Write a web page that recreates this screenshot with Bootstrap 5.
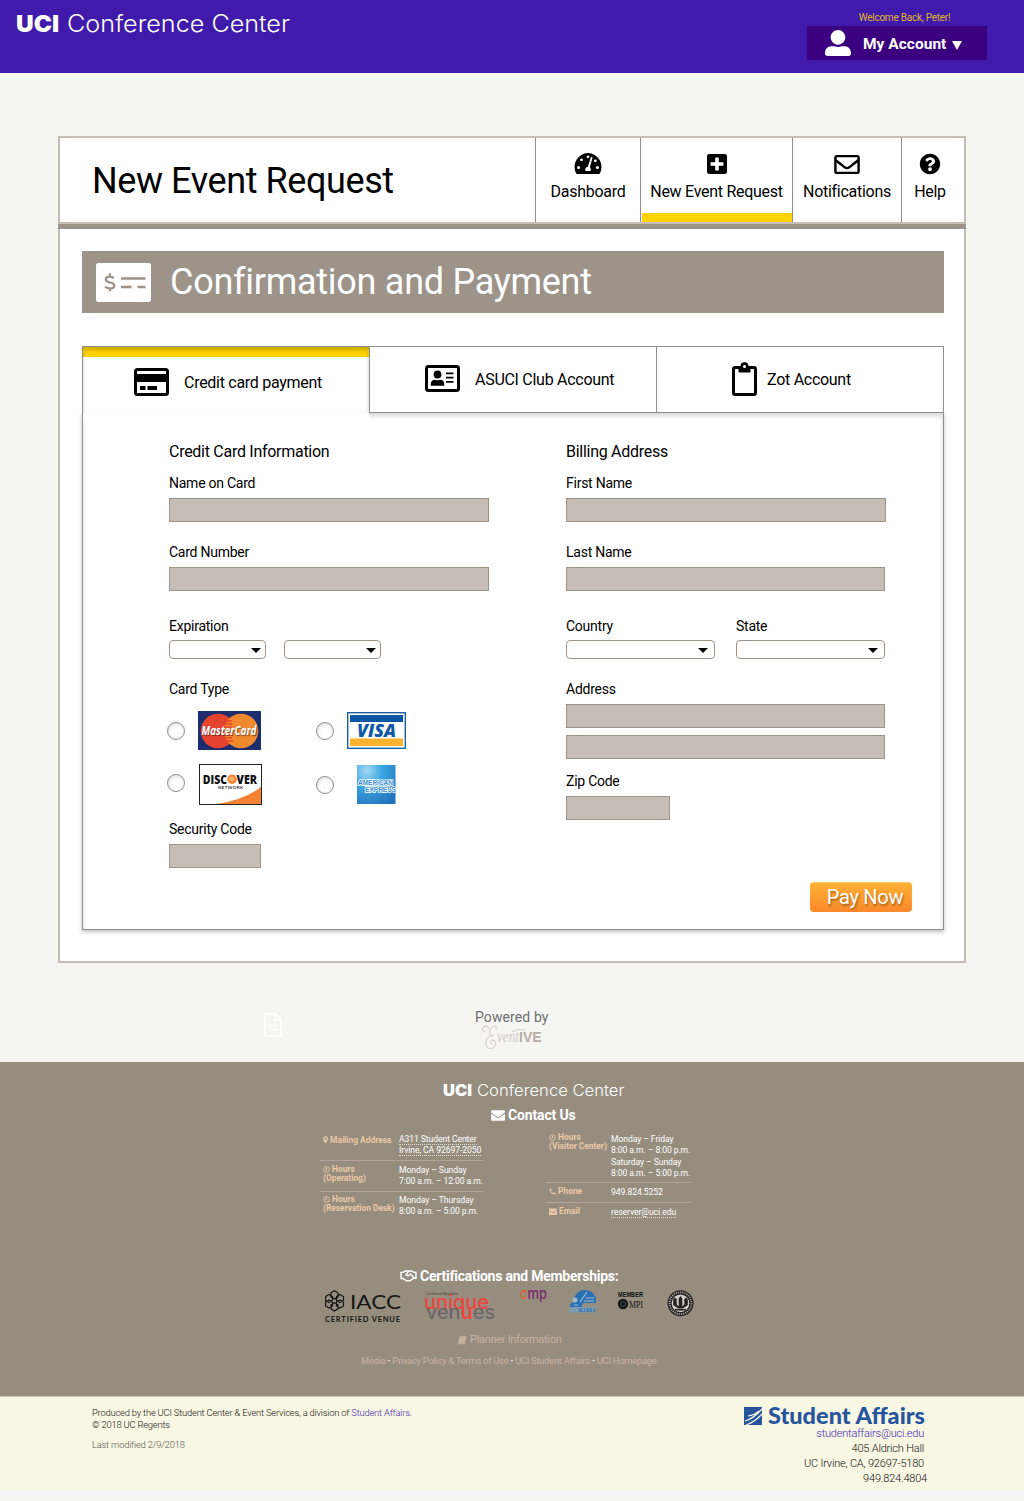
<!DOCTYPE html>
<html lang="en">
<head>
<meta charset="utf-8">
<meta name="viewport" content="width=device-width, initial-scale=1">
<title>New Event Request</title>
<link href="https://cdn.jsdelivr.net/npm/bootstrap@5.3.0/dist/css/bootstrap.min.css" rel="stylesheet">
<style>
body{font-family:Roboto,"Liberation Sans",sans-serif;font-size:16px;line-height:18px;letter-spacing:-.28px;color:#000;background:#f5f5f3}
svg{display:block;flex:none;overflow:visible;letter-spacing:0}
.topbar{height:73px;background:#3f1aab;padding:12px 37px 0 16px}
.welcome{font-size:10px;line-height:12px;color:#e2b52a;width:180px;text-align:center;padding-left:15px;letter-spacing:-.24px;margin-bottom:2px}
.account-btn{width:180px;height:34px;background:#3b0080;font-weight:700;font-size:15.5px;letter-spacing:.02px;padding:0 0 0 18px}
.frame{width:908px;height:827px;margin:63px auto 0;border:2px solid #c5beb6;background:#fff}
.frame-head{height:91px;border-bottom:5px solid #9d9389;margin:0 -2px}
.frame-head-in{height:86px;border-bottom:2px solid #c5beb6;padding-left:34px}
.frame-head h1{font-size:36px;line-height:42px;letter-spacing:-.41px;margin:0;padding-top:22px}
.nav-cell{border-left:1px solid #8f8f8f;color:#000;padding:15px 0 0;text-align:center;line-height:18px}
.nav-cell svg{height:22px;margin:0 auto 8px}
.nav-cell .strip{height:9px;background:#ffd200;margin:12px -1px 0 1px}
.banner{margin:22px 20px 0 22px;height:62px;background:#9d9389;color:#fff;padding-left:14px}
.banner h2{font-size:36px;line-height:42px;letter-spacing:-.27px;margin:0 0 0 19px}
.pay-tabs{margin:33px 20px 0 22px;height:67px;position:relative;z-index:1}
.pay-tab{border:1px solid #8f8f8f;border-left-width:0;background:#fff;color:#000}
.pay-tab.on{border-left-width:1px;border-bottom:0;box-shadow:inset 0 3px 4px rgba(0,0,0,.2),inset 0 10px #ffd200}
.panel{margin:-1px 20px 0 22px;height:518px;border:1px solid #8f8f8f;box-shadow:0 2px 4px rgba(0,0,0,.25),inset 0 3px 5px rgba(0,0,0,.16);padding:30px 31px 0 86px;position:relative}
.tab-joint{width:286px;height:9px;background:#fff;top:-1px;left:0}
.lbl{font-size:14px;line-height:16px;margin:0 0 7px;display:block;letter-spacing:-.25px}
.fld{height:24px;min-height:24px;padding:0 6px;border:1px solid #9d9389;background:#c6bdb6}
.pick{height:19px;padding:0 4px;border:1px solid #9d9389;border-radius:4px;background:#fff;color:#000;display:flex;align-items:center;justify-content:flex-end}
.pick::after{margin:2px 0 0!important;border-top:5px solid;border-left:5px solid transparent;border-right:5px solid transparent}
.form-check-input.rad{width:18px;height:18px;margin:0;float:none;border:1.5px solid #8d8d8d;background:radial-gradient(circle at 55% 60%,#fff 35%,#d8d8d8 100%)}
.pay-now{width:102px;height:30px;padding:0 0 0 8px;border:0;border-radius:4px;background:linear-gradient(#ffb236,#f9892b);box-shadow:inset 0 1px 1px #ffc870;color:#fff;font-size:20px;letter-spacing:-.3px;line-height:30px;text-shadow:1px 2px 2px rgba(90,50,0,.5)}
.powered{height:99px;padding-top:46px;color:#6f6f6f;font-size:14px}
.foot{height:334px;background:#968d7f;color:#fff;padding-top:19px}
.foot h3{font-size:14px;line-height:16px;font-weight:700;margin:0}
.info{font-size:8.6px;line-height:11.4px;letter-spacing:-.08px}
.info-row{border-bottom:1px solid #b3a49a}
.info-key{flex:none;font-weight:700;color:#ecc8a6;line-height:8.6px;font-size:8.4px;letter-spacing:0}
.info-key svg{display:inline-block;vertical-align:-1px}
.dotted{border-bottom:1px dotted #ddd}
.tan{color:#c9b39f}
.cream{height:94px;background:#f8f7e4;border-top:1px solid #c9c3b4;font-weight:300;padding:10px 97px 0 92px;font-size:9.4px;line-height:12px;letter-spacing:-.2px;color:#111}
.cream a{color:#4326b0;text-decoration:none}
.addr{font-size:11px;line-height:15px;letter-spacing:-.2px}
</style>
<script src="https://cdn.jsdelivr.net/npm/bootstrap@5.3.0/dist/js/bootstrap.bundle.min.js"></script>
</head>
<body>
<header class="topbar d-flex justify-content-between align-items-start">
  <svg width="276" height="26" viewBox="0 0 276 26" fill="#fff">
    <text x="0" y="20" font-family="Inter" font-weight="900" font-size="23.500" textLength="43" lengthAdjust="spacingAndGlyphs">UCI</text>
    <text x="51" y="20" font-family="Inter" font-weight="300" font-size="23.500" textLength="223" lengthAdjust="spacingAndGlyphs">Conference Center</text>
  </svg>
  <div>
    <div class="welcome">Welcome Back, Peter!</div>
    <button class="account-btn btn rounded-0 border-0 text-white d-flex align-items-center">
      <svg width="26" height="26" viewBox="0 0 512 512" fill="#fff"><path d="M256 288c79.500 0 144-64.500 144-144S335.500 0 256 0 112 64.500 112 144s64.500 144 144 144zm128 32h-55.100c-22.200 10.200-46.900 16-72.900 16s-50.600-5.800-72.900-16H128C57.300 320 0 377.300 0 448v16c0 26.500 21.500 48 48 48h416c26.500 0 48-21.500 48-48v-16c0-70.700-57.300-128-128-128z"/></svg>
      <span class="ms-2 ps-1" style="padding-top:3px">My Account</span>
      <svg class="mt-1" width="12" height="9" viewBox="0 0 12 9" style="margin-left:5px"><path d="M1 0h10L6 9z" fill="#fff"/></svg>
    </button>
  </div>
</header>

<main class="frame">
  <div class="frame-head">
    <div class="frame-head-in d-flex">
      <h1 class="fw-normal flex-grow-1">New Event Request</h1>
      <nav class="d-flex">
        <a class="nav-cell text-decoration-none" href="#" style="width:105px">
          <svg width="28" viewBox="0 0 28 22"><path d="M14 0a14 14 0 0 0-12 20.200q.5.800 1.300.800h21.400q.8 0 1.300-.800A14 14 0 0 0 14 0z"/><g fill="#fff"><circle cx="14" cy="3.800" r="1.400"/><circle cx="7.500" cy="6.800" r="1.400"/><circle cx="4.600" cy="14.500" r="1.500"/><circle cx="23.400" cy="14.500" r="1.500"/><circle cx="21.300" cy="7.800" r="1.400"/><path d="M17 3.800l1.600.5-2.700 10a2.900 2.900 0 0 1 .6 3.700h-5a2.900 2.900 0 0 1 2.400-4.200z"/></g></svg>Dashboard</a>
        <a class="nav-cell text-decoration-none" href="#" style="width:152px">
          <svg width="20" viewBox="0 20 448 472"><path fill-rule="evenodd" d="M400 32H48C21.500 32 0 53.500 0 80v352c0 26.500 21.500 48 48 48h352c26.500 0 48-21.500 48-48V80c0-26.500-21.500-48-48-48zm-32 252c0 6.600-5.400 12-12 12h-92v92c0 6.600-5.400 12-12 12h-56c-6.600 0-12-5.400-12-12v-92H92c-6.600 0-12-5.400-12-12v-56c0-6.600 5.400-12 12-12h92v-92c0-6.600 5.400-12 12-12h56c6.600 0 12 5.400 12 12v92h92c6.600 0 12 5.400 12 12v56z"/></svg>New Event Request<div class="strip"></div></a>
        <a class="nav-cell text-decoration-none" href="#" style="width:109px">
          <svg width="26" viewBox="0 26 512 440"><path d="M464 64H48C21.490 64 0 85.490 0 112v288c0 26.510 21.490 48 48 48h416c26.510 0 48-21.490 48-48V112c0-26.510-21.490-48-48-48zm0 48v40.805c-22.422 18.259-58.168 46.651-134.587 106.490-16.841 13.247-50.201 45.072-73.413 44.701-23.208.375-56.579-31.459-73.413-44.701C106.180 199.465 70.425 171.067 48 152.805V112h416zM48 400V214.398c22.914 18.251 55.409 43.862 104.938 82.646 21.857 17.205 60.134 55.186 103.062 54.955 42.717.231 80.509-37.199 103.053-54.947 49.528-38.783 82.032-64.401 104.947-82.653V400H48z"/></svg>Notifications</a>
        <a class="nav-cell text-decoration-none pe-2" href="#" style="width:65px">
          <svg width="22" viewBox="-12 -12 536 536"><path d="M504 256c0 136.997-111.043 248-248 248S8 392.997 8 256C8 119.083 119.043 8 256 8s248 111.083 248 248zM262.655 90c-54.497 0-89.255 22.957-116.549 63.758-3.536 5.286-2.353 12.415 2.715 16.258l34.699 26.310c5.205 3.947 12.621 3.008 16.665-2.122 17.864-22.658 30.113-35.797 57.303-35.797 20.429 0 45.698 13.148 45.698 32.958 0 14.976-12.363 22.667-32.534 33.976C247.128 238.528 216 254.941 216 296v4c0 6.627 5.373 12 12 12h56c6.627 0 12-5.373 12-12v-1.333c0-28.462 83.186-29.647 83.186-106.667 0-58.002-60.165-102-116.531-102zM256 338c-25.365 0-46 20.635-46 46 0 25.364 20.635 46 46 46s46-20.636 46-46c0-25.365-20.635-46-46-46z"/></svg>Help</a>
      </nav>
    </div>
  </div>

  <div class="banner d-flex align-items-center">
    <svg width="55" height="39" viewBox="0 0 55 39"><rect width="55" height="39" rx="2.500" fill="#fff"/><g fill="none" stroke="#9d9389" stroke-width="2.600"><path d="M25 15.500h24.500M25 24h10.500M41.500 24h8"/><path d="M17.800 15.200q-1.500-1.600-4-1.600-4 0-4 2.800 0 2.200 4 3 4.400.8 4.400 3.300 0 2.700-4.200 2.700-3 0-4.800-1.900M13.900 10.300v3.500M13.900 25v3.300" stroke-width="2.300"/></g></svg>
    <h2 class="fw-normal">Confirmation and Payment</h2>
  </div>

  <div class="pay-tabs d-flex">
    <a href="#" class="pay-tab on d-flex text-decoration-none" style="width:288px;padding:21px 0 0 51px">
      <svg width="35" height="28" viewBox="0 0 35 28"><rect x="1.500" y="1.500" width="32" height="25" rx="2" fill="none" stroke="#000" stroke-width="3"/><path d="M2 6h31v8H2zM6 18h5.500v4H6zM13.500 18h9.500v4h-9.500z"/></svg>
      <span style="margin:6px 0 0 15px">Credit card payment</span></a>
    <a href="#" class="pay-tab d-flex text-decoration-none" style="width:287px;padding:18px 0 0 55px">
      <svg width="35" height="27" viewBox="0 0 35 27"><rect x="1.500" y="1.500" width="32" height="24" rx="2" fill="none" stroke="#000" stroke-width="3"/><circle cx="12.500" cy="9.500" r="3.900"/><path d="M5.800 20.800v-1.500q0-4.500 4.300-4.500 2.400 1 4.800 0 4.300 0 4.300 4.500v1.500zM21 7.500h7.500v1.800H21zM21 11.700h7.500v1.800H21zM21 16h7.500v1.800H21z"/></svg>
      <span style="margin:6px 0 0 15px">ASUCI Club Account</span></a>
    <a href="#" class="pay-tab d-flex text-decoration-none" style="width:287px;padding:15px 0 0 75px">
      <svg width="25" height="34" viewBox="0 0 25 34"><rect x="1.500" y="5.500" width="22" height="27" rx="1.800" fill="none" stroke="#000" stroke-width="3"/><path d="M6.500 5h12v4.500q0 1-1 1h-10q-1 0-1-1z"/><circle cx="12.500" cy="4.200" r="4"/><circle cx="12.500" cy="4.400" r="1.500" fill="#fff"/></svg>
      <span style="margin:9px 0 0 10px">Zot Account</span></a>
  </div>

  <form class="panel d-flex">
    <div class="tab-joint position-absolute"></div>
    <div style="width:397px">
      <div style="height:32px">Credit Card Information</div>
      <label class="lbl">Name on Card</label><input class="form-control fld rounded-0" style="width:320px">
      <label class="lbl" style="margin-top:22px">Card Number</label><input class="form-control fld rounded-0" style="width:320px">
      <label class="lbl" style="margin:27px 0 6px">Expiration</label>
      <div class="d-flex"><button type="button" class="pick dropdown-toggle" style="width:97px"></button><button type="button" class="pick dropdown-toggle" style="width:97px;margin-left:18px"></button></div>
      <label class="lbl" style="margin:22px 0 0">Card Type</label>
      <div class="d-flex align-items-center" style="margin:13px 0 0 -2px;height:41px">
        <input type="radio" name="ct" class="form-check-input rad">
        <svg style="margin-left:13px" width="63" height="39" viewBox="0 0 63 39"><path fill="#1d2d6d" d="M0 0h63v39H0z"/><circle cx="20" cy="20" r="17.300" fill="#e5432d"/><circle cx="43" cy="20" r="17.300" fill="#f0882f"/><path d="M27 10h7M26 13h8M26 16h8M26 24h8M26 27h8M27 30h8" stroke="#e5432d" stroke-width="1.700"/><text x="3.500" y="24" font-family="Open Sans" font-weight="700" font-style="italic" font-size="12.500" fill="#fff" style="text-shadow:1px 1px 1px rgba(40,20,20,.6)" textLength="55" lengthAdjust="spacingAndGlyphs">MasterCard</text></svg>
        <input type="radio" name="ct" class="form-check-input rad" style="margin-left:55px">
        <svg style="margin-left:13px" width="59" height="37" viewBox="0 0 59 37"><rect x=".7" y=".7" width="57.600" height="35.600" fill="#fff" stroke="#1960a8" stroke-width="1.400"/><path fill="#0c58a6" d="M3 3h53v7H3z"/><path fill="#fbb22d" d="M3 26.500h53v7.500H3z"/><text x="10" y="24.500" font-family="Open Sans" font-weight="800" font-style="italic" font-size="17" fill="#0c58a6" textLength="39" lengthAdjust="spacingAndGlyphs">VISA</text></svg>
      </div>
      <div class="d-flex align-items-center" style="margin:12px 0 0 -2px;height:43px">
        <input type="radio" name="ct" class="form-check-input rad mb-1">
        <svg style="margin-left:14px" width="63" height="41" viewBox="0 0 63 41"><path fill="#fff" d="M0 0h63v41H0z"/><path d="M15 40.500Q47 36 63 22v18.500z" fill="#f58232"/><rect x=".5" y=".5" width="62" height="40" fill="none" stroke="#222"/><circle cx="33" cy="15.200" r="4.700" fill="#f58232"/><circle cx="32.500" cy="15" r="2.500" fill="#fbb06a"/><g font-family="Open Sans" font-weight="800" font-size="12.500" fill="#111"><text x="3.800" y="19.500" textLength="24.200" lengthAdjust="spacingAndGlyphs">DISC</text><text x="37.500" y="19.500" textLength="20.500" lengthAdjust="spacingAndGlyphs">VER</text></g><text x="19" y="25.300" font-family="Lato" font-weight="700" font-size="4.500" fill="#333" textLength="25">NETWORK</text></svg>
        <input type="radio" name="ct" class="form-check-input rad" style="margin-left:54px">
        <svg style="margin-left:23px" width="40" height="39" viewBox="0 0 40 39"><defs><radialGradient id="ax" cx=".25" cy=".15" r="1"><stop offset="0" stop-color="#a5d8f5"/><stop offset=".4" stop-color="#3ca7e0"/><stop offset="1" stop-color="#2272bd"/></radialGradient></defs><path fill="url(#ax)" d="M0 0h38.500v39H0z"/><g font-family="Liberation Sans" font-weight="700" font-size="7.200" fill="#3a8fd0" stroke="#fff" stroke-width="1.500" paint-order="stroke"><text x="1" y="20" textLength="35" lengthAdjust="spacingAndGlyphs">AMERICAN</text><text x="8" y="27.300" textLength="31" lengthAdjust="spacingAndGlyphs">EXPRESS</text></g></svg>
      </div>
      <label class="lbl" style="margin-top:15px">Security Code</label><input class="form-control fld rounded-0" style="width:92px">
    </div>
    <div style="width:320px">
      <div style="height:32px">Billing Address</div>
      <label class="lbl">First Name</label><input class="form-control fld rounded-0">
      <label class="lbl" style="margin-top:22px">Last Name</label><input class="form-control fld rounded-0" style="width:319px">
      <div class="d-flex" style="margin-top:27px">
        <div style="width:170px"><label class="lbl" style="margin-bottom:6px">Country</label><button type="button" class="pick dropdown-toggle" style="width:149px;padding-right:6px"></button></div>
        <div><label class="lbl" style="margin-bottom:6px">State</label><button type="button" class="pick dropdown-toggle" style="width:149px;padding-right:6px"></button></div>
      </div>
      <label class="lbl" style="margin-top:22px">Address</label><input class="form-control fld rounded-0" style="width:319px"><input class="form-control fld rounded-0" style="width:319px;margin-top:7px">
      <label class="lbl" style="margin-top:14px">Zip Code</label><input class="form-control fld rounded-0" style="width:104px">
      <button type="button" class="pay-now d-block" style="margin:62px 0 0 244px">Pay Now</button>
    </div>
  </form>
</main>

<section class="powered d-flex">
  <svg style="margin:4px 193px 0 264px" width="18" height="24" viewBox="0 0 18 24"><path d="M2 1h9.500L17 6.500V22q0 1-1 1H2q-1 0-1-1V2q0-1 1-1zM11 1v6h6M5 12.500h8M5 16.500h8" fill="none" stroke="#fff" stroke-width="2"/></svg>
  <div><div class="text-nowrap" style="height:15px;line-height:17px;width:74px;letter-spacing:.1px">Powered by</div>
    <svg style="margin-left:7px" width="62" height="26" viewBox="0 0 62 26"><g fill="none" stroke="#c6bcb2" stroke-width=".8"><path d="M3 8Q-1 6 1 3q4-3 6 2M14 5Q15 1 12 2 8 3 7.500 8q0 4 4 3.500Q5 12 4 17q-1 8 5 7.500 5-1 4.500-6-1-4-4-2-2 2 0 4M30 8q6-4 13-2"/></g><text x="15" y="17.500" font-family="Liberation Serif" font-style="italic" font-size="17" fill="#d3cbc3" textLength="22" lengthAdjust="spacingAndGlyphs">vent</text><text x="37" y="18" font-family="Liberation Sans" font-weight="700" font-size="14" fill="#b8ada4" textLength="22.500" lengthAdjust="spacingAndGlyphs">IVE</text></svg>
  </div>
</section>

<footer>
  <div class="foot">
    <svg width="182" height="18" viewBox="0 0 182 18" fill="#fff" style="margin-left:443px"><text x="0" y="14.500" font-family="Inter" font-weight="900" font-size="15.500" textLength="29" lengthAdjust="spacingAndGlyphs">UCI</text><text x="34" y="14.500" font-family="Inter" font-weight="300" font-size="15.500" textLength="147.500" lengthAdjust="spacingAndGlyphs">Conference Center</text></svg>
    <h3 class="d-flex align-items-center" style="margin:8px 0 0 491px;letter-spacing:-.15px"><svg width="14" height="11" viewBox="0 64 512 384" fill="#fff" style="margin-right:3px"><path d="M502.300 190.800c3.900-3.100 9.700-.2 9.700 4.700V400c0 26.500-21.500 48-48 48H48c-26.500 0-48-21.500-48-48V195.600c0-5 5.700-7.800 9.700-4.700 22.400 17.400 52.100 39.500 154.100 113.600 21.100 15.400 56.700 47.800 92.200 47.600 35.700.3 72-32.800 92.300-47.600 102-74.100 131.600-96.300 154-113.700zM256 320c23.200.4 56.600-29.200 73.400-41.400 132.700-96.300 142.800-104.700 173.400-128.700 5.800-4.500 9.200-11.500 9.200-18.900v-19c0-26.500-21.500-48-48-48H48c-26.500 0-48 21.500-48 48v19c0 7.400 3.400 14.300 9.200 18.900 30.600 23.900 40.700 32.400 173.400 128.700 16.800 12.200 50.200 41.800 73.400 41.400z"/></svg>Contact Us</h3>
    <div class="info d-flex text-nowrap" style="margin:11px 0 0 320px;height:132px">
      <div style="width:163px;margin-right:63px">
        <div class="info-row d-flex" style="height:27px"><div class="info-key" style="width:79px;padding:2px 0 0 3px"><svg width="5" height="8" viewBox="0 0 6 9"><path fill="#ecc8a6" fill-rule="evenodd" d="M3 0a3 3 0 0 1 3 3q0 1-3 6-3-5-3-6a3 3 0 0 1 3-3zm0 1.600a1.400 1.400 0 1 0 0 2.800 1.400 1.400 0 0 0 0-2.800z"/></svg> Mailing Address</div><div><span class="dotted">A311 Student Center</span><br><span class="dotted">Irvine, CA 92697-2050</span></div></div>
        <div class="info-row d-flex" style="height:31px;padding-top:4px"><div class="info-key" style="width:79px;padding-left:3px"><svg width="7" height="7" viewBox="0 0 8 8" fill="none" stroke="#ecc8a6"><circle cx="4" cy="4" r="3.300"/><path d="M4 2v2.500H2.500"/></svg> Hours<br>(Operating)</div><div>Monday – Sunday<br>7:00 a.m. – 12:00 a.m.</div></div>
        <div class="d-flex" style="padding-top:3px"><div class="info-key" style="width:79px;padding-left:3px"><svg width="7" height="7" viewBox="0 0 8 8" fill="none" stroke="#ecc8a6"><circle cx="4" cy="4" r="3.300"/><path d="M4 2v2.500H2.500"/></svg> Hours<br>(Reservation Desk)</div><div>Monday – Thursday<br>8:00 a.m. – 5:00 p.m.</div></div>
      </div>
      <div style="width:145px">
        <div class="info-row d-flex" style="height:49px"><div class="info-key" style="width:65px;padding-left:3px;margin-top:-1px"><svg width="7" height="7" viewBox="0 0 8 8" fill="none" stroke="#ecc8a6"><circle cx="4" cy="4" r="3.300"/><path d="M4 2v2.500H2.500"/></svg> Hours<br>(Visitor Center)</div><div>Monday – Friday<br>8:00 a.m. – 8:00 p.m.<br>Saturday – Sunday<br>8:00 a.m. – 5:00 p.m.</div></div>
        <div class="info-row d-flex" style="height:20px;padding-top:4px"><div class="info-key" style="width:65px;padding-left:3px"><svg width="7" height="7" viewBox="0 0 8 8"><path d="M1 .5Q2.500-.3 3 2.500L2.200 3.300q.8 1.700 2.300 2.400l1-.9Q8.300 5.800 7.500 7 6 8.300 3 6-.3 2.500 1 .5z" fill="#ecc8a6"/></svg> Phone</div><div>949.824.5252</div></div>
        <div class="d-flex" style="padding-top:4px"><div class="info-key" style="width:65px;padding-left:3px"><svg width="8" height="7" viewBox="0 0 8 7"><path d="M0 .5h8v1.200L4 4.400 0 1.700zM0 2.600l4 2.700 4-2.700V7H0z" fill="#ecc8a6"/></svg> Email</div><div><span class="dotted">reserver@uci.edu</span></div></div>
      </div>
    </div>
    <h3 class="d-flex align-items-center" style="margin:2px 0 0 400px;letter-spacing:-.24px"><svg width="17" height="12" viewBox="0 0 17 12" style="margin-right:3px" fill="none" stroke="#fff" stroke-width="1.400"><path d="M.5 2.500l2.500-.3L5.500 1h6L14 2.300l2.500.2M.5 8.500H3l3.500 2.300h3.500l4-2.800 2.500.5M8.500 1.300L6 5l2 1 2.500-2L14 8M1 2v7M16 2v7"/></svg>Certifications and Memberships:</h3>
    <div class="d-flex" style="margin:6px 0 0 325px">
      <svg width="76" height="34" viewBox="0 0 76 34"><g fill="none" stroke="#151515" stroke-width="1.200"><path d="M9.500.8l3.500 2v4L9.500 9 6 6.800v-4zM9.500 12.800l3.500 2v4L9.500 21 6 18.800v-4zM4 4.500l3.500 2v4L4 12.500.6 10.500v-4zM15 4.500l3.500 2v4l-3.500 2-3.500-2v-4zM4 10l3.500 2v4L4 18 .6 16v-4zM15 10l3.500 2v4L15 18l-3.500-2v-4z"/></g><text x="25" y="18.500" font-family="Lato" font-size="20" fill="#151515" textLength="51" lengthAdjust="spacingAndGlyphs">IACC</text><text x="0" y="32" font-family="Lato" font-weight="700" font-size="7.500" fill="#151515" textLength="75">CERTIFIED VENUE</text></svg>
      <svg style="margin-left:23px" width="73" height="34" viewBox="0 0 73 34"><text x="1" y="5" font-family="Liberation Sans" font-size="4.300" fill="#444" textLength="33">Certified Member</text><text x="0" y="18.800" font-family="Inter" font-weight="500" font-size="18.500" fill="#ee453f" textLength="65" lengthAdjust="spacingAndGlyphs">unique</text><text x="2" y="29.300" font-family="Inter" font-size="18.500" fill="#66636a" textLength="69" lengthAdjust="spacingAndGlyphs">ven<tspan fill="#ee453f" font-weight="600">u</tspan>es</text></svg>
      <svg style="margin-left:23px" width="28" height="16" viewBox="0 0 28 16"><text x="0" y="8.500" font-family="Inter" font-weight="500" font-size="15" fill="#7b2a6c" textLength="27" lengthAdjust="spacingAndGlyphs"><tspan fill="#e0602f">c</tspan>mp</text></svg>
      <svg style="margin-left:21px" width="28" height="25" viewBox="0 0 28 25"><path d="M4 13Q6 0 16 0q11 1 11 11v2H14l-2 5H1q-1-5 5-7z" fill="#2672b5"/><path d="M11 12L18 2M17 8h8M15 11h10M5 15h4" stroke="#a7bac7" stroke-width="1.200"/><circle cx="6" cy="10" r="2.500" fill="#a7bac7"/><path d="M1 17h25v5.500H0z" fill="#7f9cb0"/><text x="9" y="22" font-family="Liberation Serif" font-weight="700" font-size="7" fill="#1265b0" textLength="17" lengthAdjust="spacingAndGlyphs">ACCED-I</text></svg>
      <svg style="margin-left:20px" width="28" height="22" viewBox="0 0 28 22"><text x="1" y="6.500" font-family="Liberation Sans" font-weight="700" font-size="7" fill="#111" textLength="25" lengthAdjust="spacingAndGlyphs">MEMBER</text><circle cx="6" cy="14" r="5.200" fill="#181818"/><circle cx="6" cy="14" r="2.500" fill="none" stroke="#3b4555"/><text x="12" y="18" font-family="Liberation Serif" font-size="11" fill="#111" textLength="14" lengthAdjust="spacingAndGlyphs">MPI</text></svg>
      <svg style="margin-left:22px" width="27" height="28" viewBox="0 0 27 28"><circle cx="13.500" cy="13.200" r="13" fill="#222"/><circle cx="13.500" cy="13.200" r="10.900" fill="none" stroke="#aaa79f" stroke-width="1.800" stroke-dasharray="1.200 1"/><circle cx="13.500" cy="13.200" r="8.800" fill="#d4d0c9"/><path d="M13.500 6l1.800 2.500v8l2-2V9l2-1.500 1.500 2v5.500l-5 3.500h-4.600l-5-3.500V9.500l1.500-2L9.700 9v5.500l2 2v-8zM8 19h11v1.500H8z" fill="#222"/></svg>
    </div>
    <div class="tan d-flex align-items-center" style="margin:9px 0 0 457px;font-size:11px;line-height:14px;letter-spacing:-.3px"><svg width="10" height="9" viewBox="0 0 10 10" style="margin-right:3px"><path d="M2.500 0H10L8.500 8v1.500H1Q-.5 9 .3 7zM2 8h4.500" fill="#c9b39f" stroke="#968d7f" stroke-width=".5"/></svg>Planner Information</div>
    <div class="tan" style="margin:8px 0 0 361px;font-size:9.300px;line-height:12px;letter-spacing:-.22px">Media <b class="text-white">·</b> Privacy Policy &amp; Terms of Use <b class="text-white">·</b> UCI Student Affairs <b class="text-white">·</b> UCI Homepage</div>
  </div>
  <div class="cream d-flex justify-content-between">
    <div class="text-nowrap">Produced by the UCI Student Center &amp; Event Services, a division of <a href="#">Student Affairs.</a><br>© 2018 UC Regents<div style="margin-top:8px;color:#555">Last modified 2/9/2018</div></div>
    <div class="addr text-end">
      <svg width="183" height="19" viewBox="0 0 183 19" fill="#27549c"><path d="M0 0h18v18H0z"/><path d="M1 14Q9 12 18 2M2 18Q11 15 18 7M4 9q7-1 11-5" fill="none" stroke="#f8f7e4" stroke-width="1.200"/><text x="24" y="17.300" font-family="Lato" font-weight="900" font-size="23" textLength="157" lengthAdjust="spacingAndGlyphs">Student Affairs</text></svg>
      <div style="padding-right:3px"><a href="#">studentaffairs@uci.edu</a><br>405 Aldrich Hall<br>UC Irvine, CA, 92697-5180</div>949.824.4804
    </div>
  </div>
</footer>
</body>
</html>
